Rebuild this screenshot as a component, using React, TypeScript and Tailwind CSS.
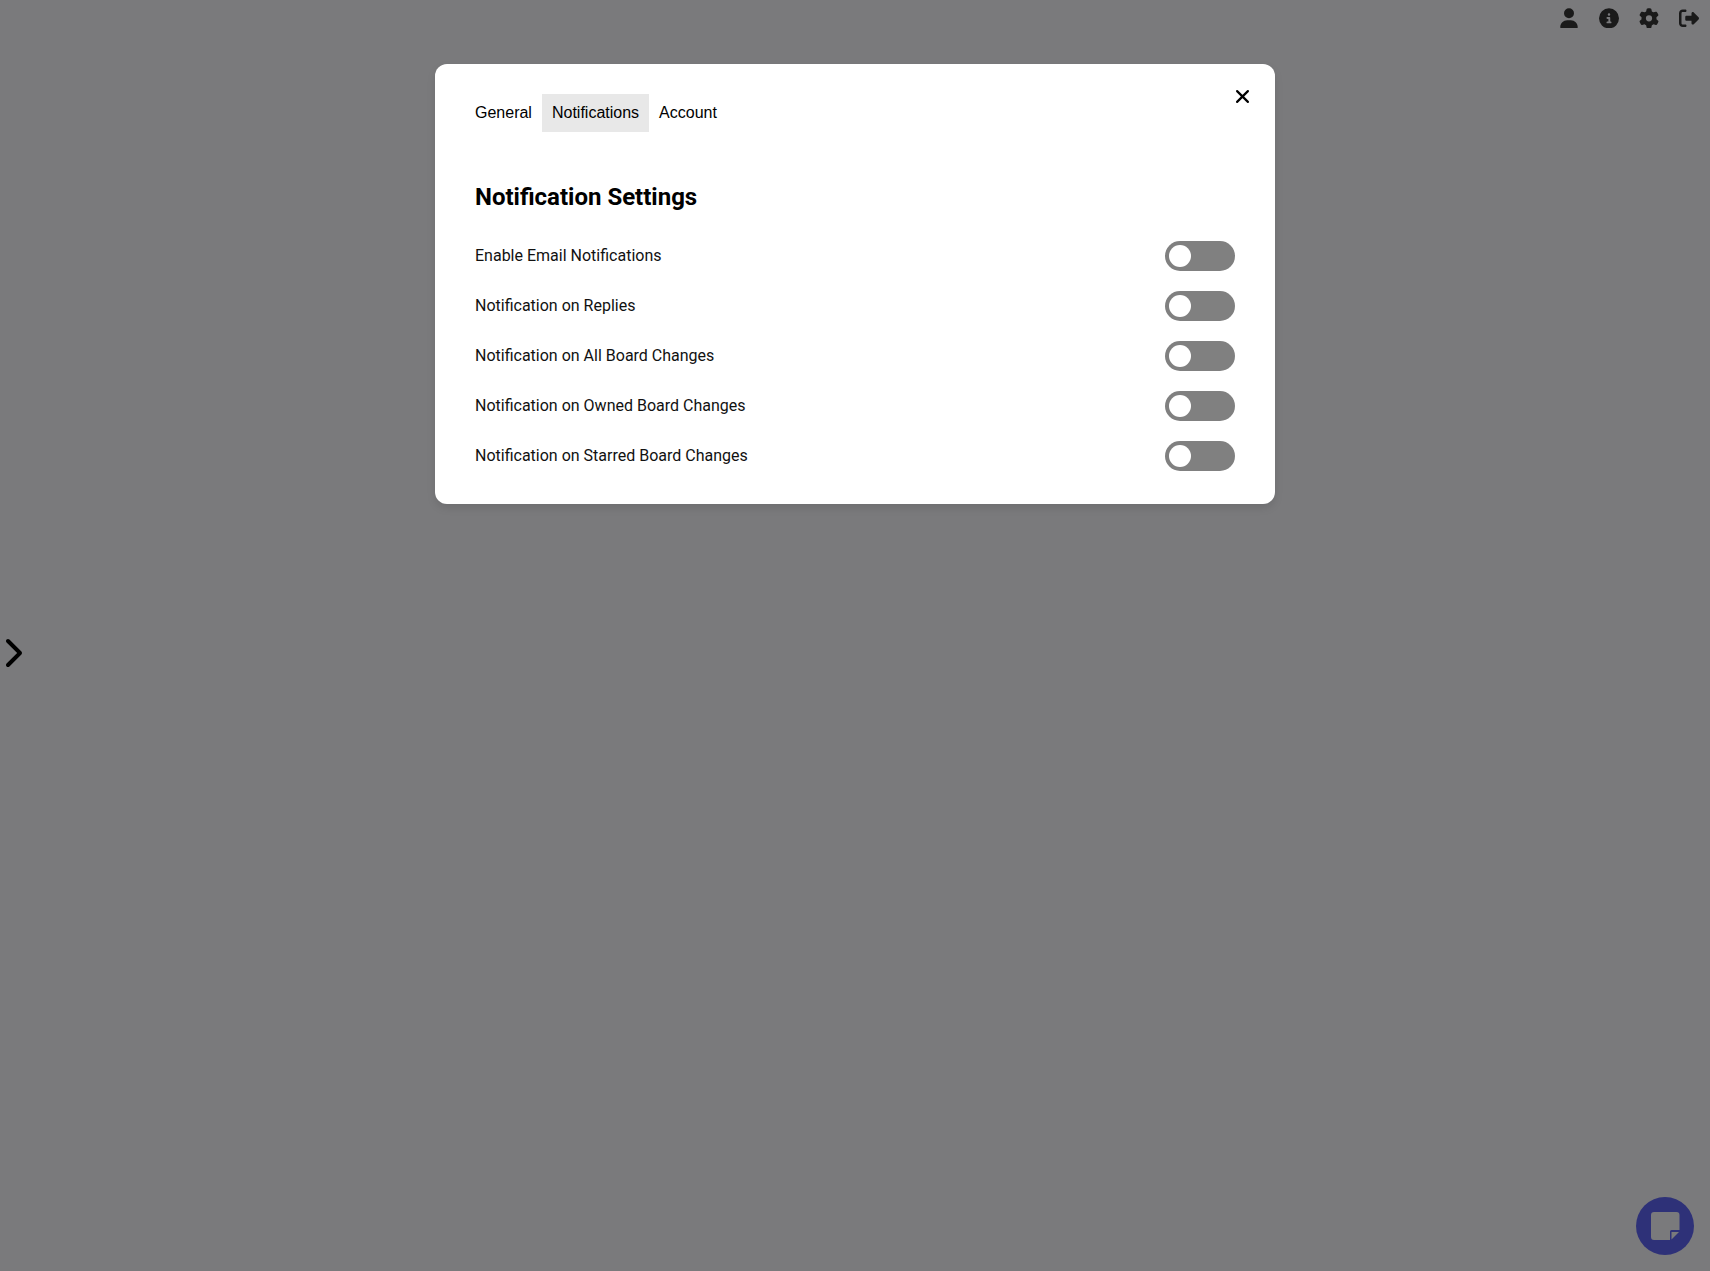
import React from "react";
import {
  FaUser,
  FaCircleInfo,
  FaGear,
  FaRightFromBracket,
  FaChevronRight,
} from "react-icons/fa6";

const tabs = ["General", "Notifications", "Account"];

const settings = [
  "Enable Email Notifications",
  "Notification on Replies",
  "Notification on All Board Changes",
  "Notification on Owned Board Changes",
  "Notification on Starred Board Changes",
];

function Toggle() {
  return (
    <button role="switch" aria-checked="false" className="flex h-[30px] w-[70px] items-center rounded-full bg-[#808080] px-1">
      <span className="size-[22px] rounded-full bg-white" />
    </button>
  );
}

function CloseIcon() {
  return (
    <svg viewBox="0 0 20 20" className="size-5" fill="none" stroke="currentColor" strokeWidth="2.2" strokeLinecap="round">
      <path d="M4.100 4.100 14.900 14.900M14.900 4.100 4.100 14.900" />
    </svg>
  );
}

function NoteIcon() {
  return (
    <svg viewBox="0 0 29 29" className="ml-px mt-px size-[29px]" fill="#7a7a7c">
      <path d="M3 0h22.500A3 3 0 0 1 28.500 3V18h-8a1.500 1.500 0 0 0-1.500 1.500V28h-16A3 3 0 0 1 0 25V3A3 3 0 0 1 3 0z" />
      <path d="M20.500 20H28L20.500 27.500z" />
    </svg>
  );
}

export default function App() {
  return (
    <div className="relative h-[1271px] w-full overflow-hidden bg-[#7a7a7c] font-['Roboto',sans-serif] text-black">
      <header className="flex h-[36px] items-center justify-end gap-5 pr-[11px] text-[20px] text-[#1a1a1a]">
        <FaUser className="w-5" viewBox="-32 -8 512 512" />
        <FaCircleInfo viewBox="0 -8 512 512" />
        <FaGear viewBox="0 -8 512 512" />
        <FaRightFromBracket viewBox="0 -8 512 512" />
      </header>

      <main className="mx-auto mt-[28px] h-[440px] w-[840px] rounded-xl bg-white px-10 pt-[30px] shadow-[0_4px_8px_rgba(0,0,0,0.1)]">
        <div className="flex items-start justify-between">
          <nav className="-ml-[10px] flex font-['Liberation_Sans',sans-serif] text-[16px] leading-[18px]">
            {tabs.map((tab) => (
              <button key={tab} className={tab === "Notifications" ? "bg-[#e8e8e8] p-[10px]" : "p-[10px]"}>
                {tab}
              </button>
            ))}
          </nav>
          <button aria-label="Close" className="-mt-[7px] -mr-[18px]">
            <CloseIcon />
          </button>
        </div>

        <h2 className="mt-[51px] text-[24px] leading-[28px] font-bold">Notification Settings</h2>

        <div className="mt-[30px] flex flex-col gap-5">
          {settings.map((label) => (
            <div key={label} className="flex h-[30px] items-center justify-between">
              <span className="pb-[2px] text-[16px] leading-[19px] text-[#111]">{label}</span>
              <Toggle />
            </div>
          ))}
        </div>
      </main>

      <button aria-label="Open sidebar" className="absolute top-[637px] left-[-4px] text-[32px]">
        <FaChevronRight />
      </button>
      <button
        aria-label="Add note"
        className="absolute right-4 bottom-4 flex size-[58px] items-center justify-center rounded-full bg-[#2e3178]"
      >
        <NoteIcon />
      </button>
    </div>
  );
}
